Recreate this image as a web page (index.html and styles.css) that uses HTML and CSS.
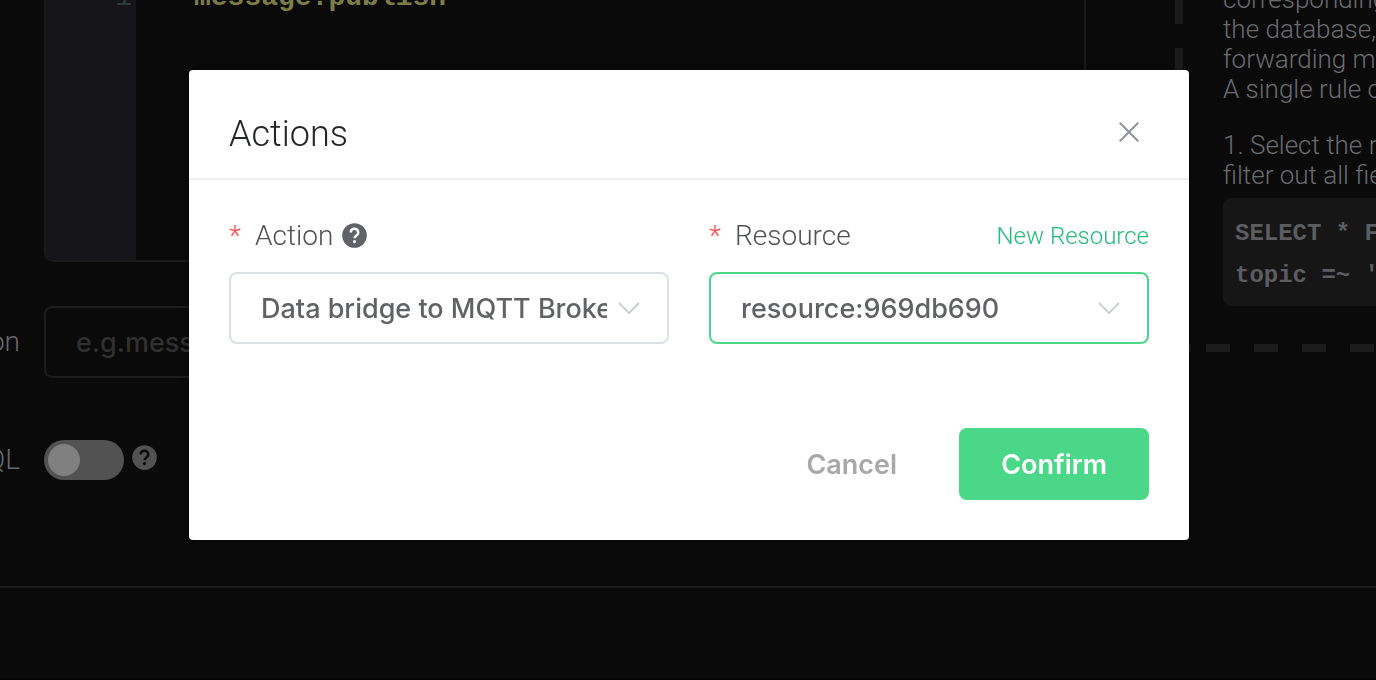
FILE: index.html
```html
<!DOCTYPE html>
<html lang="en">
<head>
<meta charset="utf-8">
<title>Actions</title>
<meta name="viewport" content="width=device-width, initial-scale=1">
<link rel="stylesheet" href="styles.css">
</head>
<body>
<main class="page">
  <div class="columns">
    <form class="rule-form">
      <div class="editor">
        <div class="gutter">1</div>
        <code class="code">message.publish</code>
      </div>
      <div class="row">
        <label class="row-label" for="description">on</label>
        <input class="text-input" id="description" type="text" placeholder="e.g.mess">
      </div>
      <div class="row row-switch">
        <label class="row-label" for="sql-test">QL</label>
        <input class="switch" id="sql-test" type="checkbox" role="switch">
        <svg class="help help-dim" viewBox="0 0 25 25" aria-hidden="true">
          <circle class="help-disc" cx="12.500" cy="12.500" r="12.300"/>
          <path class="help-mark" d="M8.800 9.500a3.700 3.600 0 1 1 5.600 2.900c-1.300.9-1.900 1.400-1.900 2.900"/>
          <circle class="help-dot" cx="12.500" cy="18.600" r="1.600"/>
        </svg>
      </div>
    </form>
    <aside class="guide">
      <div class="guide-content">
        <p class="guide-text">corresponding<br>the database,<br>forwarding m<br>A single rule c</p>
        <p class="guide-text">1. Select the r<br>filter out all fie</p>
        <pre class="sample">SELECT * F
topic =~ '</pre>
      </div>
    </aside>
  </div>
  <hr class="divider">
</main>

<div class="overlay">
  <section class="dialog" role="dialog" aria-modal="true" aria-labelledby="dialog-title">
    <header class="dialog-header">
      <h1 class="dialog-title" id="dialog-title">Actions</h1>
      <button class="close" type="button" aria-label="Close">
        <svg class="close-icon" viewBox="0 0 20 20" aria-hidden="true"><path d="M.700.700l18.600 18.600M19.300.700L.700 19.300"/></svg>
      </button>
    </header>
    <form class="dialog-form">
      <div class="fields">
        <div class="field">
          <div class="field-head">
            <span class="required">*</span>
            <label class="field-label" for="action">Action</label>
            <svg class="help" viewBox="0 0 25 25" aria-hidden="true">
              <circle class="help-disc" cx="12.500" cy="12.500" r="12.300"/>
              <path class="help-mark" d="M8.800 9.500a3.700 3.600 0 1 1 5.600 2.900c-1.300.9-1.900 1.400-1.900 2.900"/>
              <circle class="help-dot" cx="12.500" cy="18.600" r="1.600"/>
            </svg>
          </div>
          <div class="select-wrap">
            <select class="select" id="action"><option>Data bridge to MQTT Broker</option></select>
            <svg class="chevron" viewBox="0 0 22 12" aria-hidden="true"><path d="M1 1l10 10L21 1"/></svg>
          </div>
        </div>
        <div class="field">
          <div class="field-head">
            <span class="required">*</span>
            <label class="field-label" for="resource">Resource</label>
            <a class="new-link" href="#">New Resource</a>
          </div>
          <div class="select-wrap">
            <select class="select select-active" id="resource"><option>resource:969db690</option></select>
            <svg class="chevron" viewBox="0 0 22 12" aria-hidden="true"><path d="M1 1l10 10L21 1"/></svg>
          </div>
        </div>
      </div>
      <footer class="actions">
        <button class="button" type="button">Cancel</button>
        <button class="button button-primary" type="button">Confirm</button>
      </footer>
    </form>
  </section>
</div>
</body>
</html>
```
FILE: styles.css
```css
* {
  box-sizing: border-box;
}

body {
  margin: 0;
  background: #0a0a0a;
  font-family: Roboto, "Liberation Sans", sans-serif;
  font-weight: 300;
}

/* Dimmed page behind the dialog */
.page {
  min-height: 100vh;
  overflow: hidden;
  border-bottom: 2px solid #040404;
}

.columns {
  display: flex;
  align-items: flex-start;
}

.rule-form {
  flex: 1;
  min-width: 0;
  margin-right: 89px;
}

.editor {
  display: flex;
  height: 262px;
  margin-left: 44px;
  border: 2px solid #1a1a1b;
  border-top: 0;
  border-radius: 0 0 10px 10px;
  overflow: hidden;
  font: bold 28px/40px "Liberation Mono", monospace;
}

.gutter,
.code {
  display: flex;
  flex-direction: column;
  justify-content: flex-end;
  padding-bottom: 242px;
  height: 260px;
}

.gutter {
  align-items: flex-end;
  width: 90px;
  padding-right: 4px;
  background: #151517;
  color: #2c3c3c;
  font-weight: normal;
}

.code {
  font: inherit;
  padding-left: 58px;
  color: #7d7d47;
}

.row {
  display: flex;
  align-items: center;
  gap: 24px;
  margin-top: 44px;
}

.row-label {
  display: flex;
  justify-content: flex-end;
  width: 20px;
  overflow: hidden;
  color: #68686a;
  font-size: 28px;
  line-height: 40px;
}

.text-input {
  flex: 1;
  min-width: 0;
  height: 72px;
  padding: 0 30px;
  border: 2px solid #1c1c1d;
  border-radius: 8px;
  background: transparent;
  color: #606266;
  font: 500 27px Inter, sans-serif;
}

.text-input::placeholder {
  color: #303030;
  opacity: 1;
}

.row-switch {
  margin-top: 62px;
}

.switch {
  appearance: none;
  width: 80px;
  height: 40px;
  margin: 0;
  padding: 4px;
  border-radius: 20px;
  background: #525252;
}

.switch::before {
  content: "";
  display: block;
  width: 32px;
  height: 32px;
  border-radius: 50%;
  background: #808080;
}

.help {
  width: 25px;
  height: 25px;
  flex: none;
  margin-bottom: 2px;
}

.help-disc {
  fill: #606266;
}

.help-mark {
  fill: none;
  stroke: #fff;
  stroke-width: 2.4;
}

.help-dot {
  fill: #fff;
}

.help-dim {
  margin: 0 0 6px -16px;
}

.help-dim .help-disc {
  fill: #525252;
}

.help-dim .help-mark {
  stroke: #0a0a0a;
}

.help-dim .help-dot {
  fill: #0a0a0a;
}

.guide {
  display: flex;
  flex-direction: column;
  justify-content: flex-end;
  width: 201px;
  height: 352px;
  padding: 0 0 46px 48px;
  overflow: hidden;
  white-space: nowrap;
  background-image:
    linear-gradient(#1b1b1c, #1b1b1c),
    linear-gradient(to right, #1b1b1c 24px, transparent 24px),
    linear-gradient(to bottom, #1b1b1c 24px, transparent 24px);
  background-size: 16px 8px, 48px 8px, 8px 48px;
  background-position: 0 100%, 31px 100%, 0 0;
  background-repeat: no-repeat, repeat-x, repeat-y;
}

.guide-text {
  margin: 0 0 26px;
  color: #6a6b6f;
  font-size: 26px;
  line-height: 30px;
}

.guide-text + .guide-text {
  margin-bottom: 8px;
}

.sample {
  margin: 0;
  padding: 15px 12px 9px;
  border-radius: 8px 0 0 8px;
  background: #161616;
  color: #5c5d60;
  font: bold 24px/42px "Liberation Mono", monospace;
}

.divider {
  height: 2px;
  margin: 106px 0 0;
  border: 0;
  background: #1b1b1b;
}

/* Dialog */
.overlay {
  position: fixed;
  inset: 0;
  display: flex;
  align-items: flex-start;
  padding: 70px 187px 0 189px;
}

.dialog {
  flex: 1;
  min-width: 0;
  border-radius: 4px;
  background: #fff;
  box-shadow: 0 2px 6px rgba(0, 0, 0, 0.3);
}

.dialog-header {
  display: flex;
  align-items: center;
  justify-content: space-between;
  padding: 40px 50px 20px 40px;
  border-bottom: 2px solid #f0f0f0;
}

.dialog-title {
  margin: 0;
  color: #242629;
  font-size: 36px;
  font-weight: 300;
  line-height: 48px;
}

.close {
  display: flex;
  padding: 0 0 4px;
  border: 0;
  background: none;
}

.close-icon {
  width: 20px;
  height: 20px;
  fill: none;
  stroke: #909399;
  stroke-width: 2;
}

.dialog-form {
  padding: 36px 40px 40px;
}

.fields {
  display: grid;
  grid-template-columns: 1fr 1fr;
  gap: 40px;
}

.field {
  min-width: 0;
}

.field-head {
  display: flex;
  align-items: center;
  height: 40px;
  margin-bottom: 16px;
  font-size: 28px;
  line-height: 40px;
}

.required {
  width: 26px;
  color: #ff4c4c;
}

.field-label {
  margin-right: 9px;
  color: #505256;
}

.new-link {
  margin-left: auto;
  color: #22bb7c;
  font-size: 24px;
  text-decoration: none;
}

.select-wrap {
  display: grid;
  align-items: center;
}

.select,
.chevron {
  grid-area: 1 / 1;
}

.select {
  appearance: none;
  width: 100%;
  height: 72px;
  padding: 0 60px 0 30px;
  border: 2px solid #dcdfe6;
  border-radius: 8px;
  background: #fff;
  color: #606266;
  font: 500 27px Inter, sans-serif;
}

.select-active {
  border-color: #4ad787;
}

.chevron {
  justify-self: end;
  width: 22px;
  height: 12px;
  margin-right: 29px;
  fill: none;
  stroke: #c0c4cc;
  stroke-width: 1.6;
  pointer-events: none;
}

.actions {
  display: flex;
  justify-content: flex-end;
  gap: 20px;
  margin-top: 84px;
}

.button {
  height: 72px;
  padding: 0 42px;
  border: 0;
  border-radius: 8px;
  background: none;
  color: #a8a8a8;
  font: 600 27px Inter, sans-serif;
}

.button-primary {
  background: #4ad787;
  color: #fff;
}
```
